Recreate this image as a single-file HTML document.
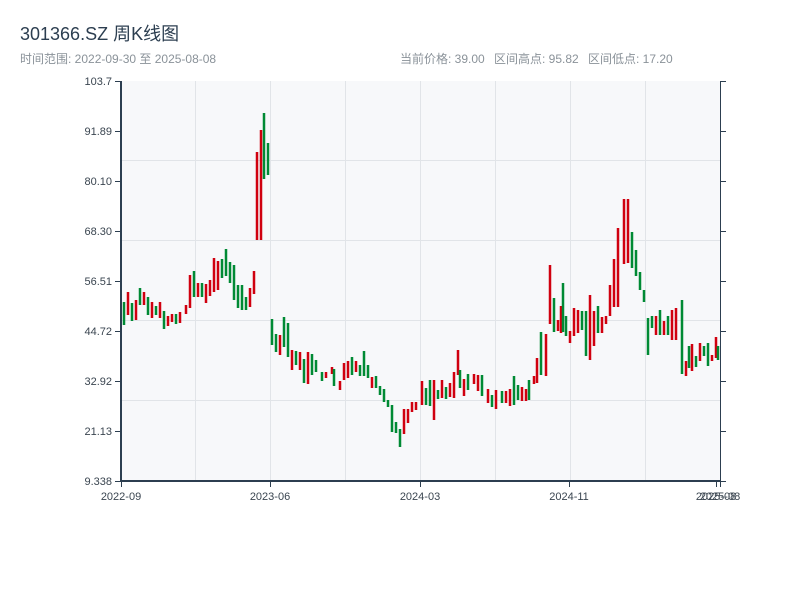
<!DOCTYPE html>
<html><head><meta charset="utf-8"><style>
body{margin:0;background:#fff;width:800px;height:600px;overflow:hidden;font-family:"Liberation Sans","Noto Sans CJK SC",sans-serif}
</style></head><body>
<svg width="800" height="600" xmlns="http://www.w3.org/2000/svg" font-family="Liberation Sans, Noto Sans CJK SC, sans-serif">
<text x="20" y="40" font-size="18" fill="#2c3e50">301366.SZ 周K线图</text>
<text x="20" y="63" font-size="12" fill="#8a9299">时间范围: 2022-09-30 至 2025-08-08</text>
<text x="400" y="63" font-size="12" fill="#8a9299">当前价格: 39.00</text>
<text x="494" y="63" font-size="12" fill="#8a9299">区间高点: 95.82</text>
<text x="588" y="63" font-size="12" fill="#8a9299">区间低点: 17.20</text>
<rect x="121" y="81" width="599" height="400" fill="#f7f8fa"/>
<g stroke="#e1e4e8" stroke-width="1">
<line x1="195.5" y1="81" x2="195.5" y2="481"/><line x1="270.5" y1="81" x2="270.5" y2="481"/><line x1="345.5" y1="81" x2="345.5" y2="481"/><line x1="420.5" y1="81" x2="420.5" y2="481"/><line x1="495.5" y1="81" x2="495.5" y2="481"/><line x1="570.5" y1="81" x2="570.5" y2="481"/><line x1="645.5" y1="81" x2="645.5" y2="481"/>
<line x1="121" y1="160.5" x2="720" y2="160.5"/><line x1="121" y1="240.5" x2="720" y2="240.5"/><line x1="121" y1="320.5" x2="720" y2="320.5"/><line x1="121" y1="400.5" x2="720" y2="400.5"/>
</g>
<g id="c"></g>
<line x1="121" y1="81" x2="121" y2="482" stroke="#2c3e50" stroke-width="2"/>
<line x1="120" y1="481" x2="721" y2="481" stroke="#2c3e50" stroke-width="2"/>
<line x1="720.5" y1="81" x2="720.5" y2="481" stroke="#2c3e50" stroke-width="1"/>
<g stroke="#2c3e50" stroke-width="1">
<line x1="115" y1="81.5" x2="121" y2="81.5"/><line x1="115" y1="131.5" x2="121" y2="131.5"/><line x1="115" y1="181.5" x2="121" y2="181.5"/><line x1="115" y1="231.5" x2="121" y2="231.5"/><line x1="115" y1="281.5" x2="121" y2="281.5"/><line x1="115" y1="331.5" x2="121" y2="331.5"/><line x1="115" y1="381.5" x2="121" y2="381.5"/><line x1="115" y1="431.5" x2="121" y2="431.5"/><line x1="115" y1="481.5" x2="121" y2="481.5"/>
<line x1="720" y1="81.5" x2="726" y2="81.5"/><line x1="720" y1="131.5" x2="726" y2="131.5"/><line x1="720" y1="181.5" x2="726" y2="181.5"/><line x1="720" y1="231.5" x2="726" y2="231.5"/><line x1="720" y1="281.5" x2="726" y2="281.5"/><line x1="720" y1="331.5" x2="726" y2="331.5"/><line x1="720" y1="381.5" x2="726" y2="381.5"/><line x1="720" y1="431.5" x2="726" y2="431.5"/><line x1="720" y1="481.5" x2="726" y2="481.5"/>
<line x1="121.5" y1="481" x2="121.5" y2="487"/><line x1="270.5" y1="481" x2="270.5" y2="487"/><line x1="420.5" y1="481" x2="420.5" y2="487"/><line x1="569.5" y1="481" x2="569.5" y2="487"/><line x1="716.5" y1="481" x2="716.5" y2="487"/><line x1="720.5" y1="481" x2="720.5" y2="487"/>
</g>
<g font-size="11" fill="#3a4550" text-anchor="end">
<text x="112" y="85">103.7</text><text x="112" y="135">91.89</text><text x="112" y="185">80.10</text><text x="112" y="235">68.30</text><text x="112" y="285">56.51</text><text x="112" y="335">44.72</text><text x="112" y="385">32.92</text><text x="112" y="435">21.13</text><text x="112" y="485">9.338</text>
</g>
<g font-size="11" fill="#3a4550" text-anchor="middle">
<text x="121" y="500">2022-09</text><text x="270" y="500">2023-06</text><text x="420" y="500">2024-03</text><text x="569" y="500">2024-11</text><text x="716" y="500">2025-08</text><text x="720" y="500">2025-08</text>
</g>
</svg>
<script>
var d=[[124,'g',302,325],[128,'r',292,315],[132,'g',303,321],[136,'r',300,320],[140,'g',288,305],[144,'r',292,305],[148,'g',297,315],[152,'r',302,318],[156,'g',306,315],[160,'r',302,318],[164,'g',311,329],[168,'r',316,326],[172,'r',314,322],[176,'g',314,324],[180,'r',312,323],[186,'r',305,314],[190,'r',275,308],[194,'g',271,297],[198,'r',283,297],[202,'g',283,297],[206,'r',284,303],[210,'r',280,296],[214,'r',258,292],[218,'r',261,290],[222,'g',259,278],[226,'g',249,276],[230,'g',262,283],[234,'g',265,300],[238,'g',285,308],[242,'g',285,310],[246,'g',297,310],[250,'r',288,307],[254,'r',271,294],[257,'r',152,240],[261,'r',130,240],[264,'g',113,179],[268,'g',143,175],[272,'g',319,345],[276,'g',334,352],[280,'r',335,355],[284,'g',317,347],[288,'g',323,357],[292,'r',350,370],[296,'g',351,365],[300,'r',352,370],[304,'g',359,383],[308,'r',352,384],[312,'g',354,375],[316,'g',360,372],[322,'g',372,381],[326,'r',372,378],[332,'r',367,374],[334,'g',369,386],[340,'r',381,390],[344,'r',363,380],[348,'r',361,378],[352,'g',357,375],[356,'r',361,372],[360,'g',365,376],[364,'g',351,376],[368,'g',365,378],[372,'r',377,388],[376,'g',376,388],[380,'g',386,395],[384,'g',389,402],[388,'g',400,407],[392,'g',405,432],[396,'g',422,433],[400,'g',429,447],[404,'r',409,434],[408,'r',409,423],[412,'r',402,412],[416,'r',402,410],[422,'r',381,405],[426,'g',388,405],[430,'g',380,406],[434,'r',380,420],[438,'g',390,399],[442,'r',380,398],[446,'g',387,399],[450,'r',383,397],[454,'r',372,398],[458,'r',350,375],[460,'g',370,388],[464,'r',379,396],[468,'g',374,390],[474,'r',374,384],[478,'r',375,391],[482,'g',375,396],[488,'r',389,403],[492,'g',395,407],[496,'r',390,409],[502,'g',391,403],[506,'r',391,403],[510,'r',389,406],[514,'g',376,405],[518,'g',385,400],[522,'r',387,401],[526,'r',389,401],[529,'g',380,400],[534,'r',376,384],[537,'r',358,383],[541,'g',332,375],[546,'r',334,376],[550,'r',265,324],[554,'g',298,332],[558,'r',320,331],[561,'r',306,333],[563,'g',283,332],[566,'g',316,336],[570,'r',331,343],[574,'r',308,336],[578,'r',310,333],[582,'g',311,330],[586,'g',311,356],[590,'r',295,360],[594,'r',311,346],[598,'g',306,333],[602,'r',317,333],[606,'r',316,324],[610,'r',285,316],[614,'r',259,307],[618,'r',228,307],[624,'r',199,264],[628,'r',199,263],[632,'g',232,268],[636,'g',250,276],[640,'g',272,290],[644,'g',290,302],[648,'g',318,355],[652,'g',316,328],[656,'r',316,335],[660,'g',310,335],[664,'r',321,335],[668,'g',316,335],[672,'r',310,340],[676,'r',308,340],[682,'g',300,374],[686,'r',361,376],[689,'g',346,368],[692,'r',344,371],[696,'g',356,367],[700,'r',343,361],[704,'g',346,356],[708,'g',343,366],[712,'r',355,361],[716,'r',337,358],[718,'g',346,360]];
var s='';d.forEach(function(c){s+='<rect x="'+(c[0]-1.25)+'" y="'+c[2]+'" width="2.5" height="'+(c[3]-c[2])+'" fill="'+(c[1]=='r'?'#d0000f':'#008a34')+'"/>';});
document.getElementById('c').innerHTML=s;
</script>
</body></html>
